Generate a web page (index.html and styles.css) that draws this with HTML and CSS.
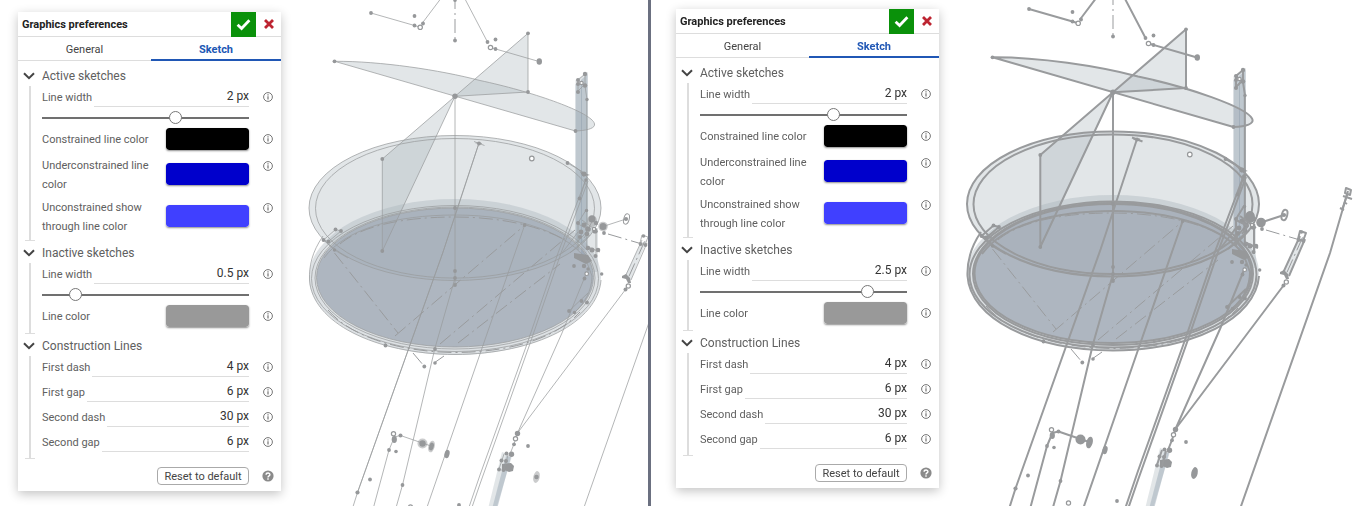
FILE: index.html
```html
<!DOCTYPE html>
<html lang="en">
<head>
<meta charset="utf-8">
<title>Graphics preferences</title>
<link rel="stylesheet" href="styles.css">
</head>
<body>
<svg class="defs" aria-hidden="true">
  <defs>
    <symbol id="i-check" viewBox="0 0 14 12"><path d="M1.5 6.2 5.2 9.8 12.5 2" fill="none" stroke="currentColor" stroke-width="2.6"/></symbol>
    <symbol id="i-close" viewBox="0 0 10 10"><path d="M1 1 9 9M9 1 1 9" fill="none" stroke="currentColor" stroke-width="2.8"/></symbol>
    <symbol id="i-chevron" viewBox="0 0 12 8"><path d="M1 1.2 6 6.2 11 1.2" fill="none" stroke="currentColor" stroke-width="2"/></symbol>
    <symbol id="i-info" viewBox="0 0 10 10"><circle cx="5" cy="5" r="4.4" fill="none" stroke="currentColor" stroke-width="0.9"/><path d="M5 4.2V7.6M5 2.3V3.4" stroke="currentColor" stroke-width="1.1"/></symbol>
    <symbol id="i-help" viewBox="0 0 12 12"><circle cx="6" cy="6" r="5.6" fill="currentColor"/><path d="M4.1 4.8C4.1 2.4 8 2.5 7.9 4.7 7.8 6 6 5.9 6 7.5M6 8.3V9.7" fill="none" stroke="#fff" stroke-width="1.4"/></symbol>

    <g id="model">
      <g class="face">
        <ellipse cx="455" cy="208" rx="146" ry="72.5"/>
        <path d="M455 96.3 382.3 159V251Z"/>
        <path d="M455 96.3 528 33.3V92Z"/>
        <path d="M334.5 61.3C380 61 440 70 480 80.5 530 91 588 111 594 122.500 597 128 588 130.500 575.500 131Z"/>
        <path d="M575.500 80 588 72V250H575.500Z"/>
      </g>
      <path class="face-band" fill-rule="evenodd" d="M309 277a146 78 0 1 0 292 0a146 78 0 1 0 -292 0ZM316.500 277.500a138.500 69.500 0 1 0 277 0a138.500 69.500 0 1 0 -277 0Z"/>
      <ellipse class="face-dark" cx="455" cy="277.500" rx="138.500" ry="69.500"/>
      <path class="face-mast" d="M575.500 84H582V243H575.500Z"/>
      <path class="face-mast" d="M581 80 587.500 74V262L581 256Z"/>
      <path class="face" d="M502 452 512 456 495 513H487Z"/>
      <path class="face-mast" d="M506 456 511 457 496 513H491Z"/>
      <path class="face" d="M588 228H598V272H588ZM641 243 647 240 631 280 625 276Z"/>

      <g class="edge">
        <ellipse cx="455" cy="208" rx="146" ry="72.500"/>
        <ellipse cx="455" cy="208.300" rx="139.500" ry="69.800"/>
        <ellipse cx="455" cy="277.500" rx="138.500" ry="69.500"/>
        <ellipse cx="455" cy="278" rx="140" ry="71"/>
        <path d="M323 236C312 252 309 266 309.500 280 312 322 374 354 455 354.500 536 354 598 322 601 280"/>
        <ellipse cx="455" cy="278.500" rx="143.500" ry="73"/>
        <path d="M324 258C345 229 395 215 455 215 520 215 570 234 588 262"/>
        <path d="M455 96.300 382.300 159V251ZM455 96.300 528 33.300V92ZM455 96.300V285"/>
        <path d="M334.500 61.300C380 61 440 70 480 80.500 530 91 588 111 594 122.500 597 128 588 130.500 575.500 131Z"/>
        <path d="M371 13 414.500 25.500 420 27.300M422 23.500 443.500-5M463-5 465-1 487.500 42M490.500 47.500 539 61.500"/>
        <path d="M479 143 442.700 253 357.500 492.500 351 513M479 143 442.700 253 357.500 492.500"/>
        <path d="M474 141.500 484.500 145.500M475.500 143 482 143.500"/>
        <path d="M455 278 435 348 402.500 485 394.500 513M394 438 389 450 372 513"/>
        <path d="M524.700 225 515 253 480 354 425 513"/>
        <path d="M586 179 558 253 527 344 480 475 467 513M588 181 561 253 529.500 345 480 484 470 513"/>
        <path d="M586 274 562 333 517.500 433 625.500 289.500M517.500 433 514 444 510 454"/>
        <path d="M642 240 625 277M647 243 631 280"/>
        <path d="M690 195 672 257 582 513M690 195 672 257"/>
        <path d="M585 74 578 80V91L584 85 578 80M585 74V86L587 99.500M586.800 99V250"/>
        <path d="M567.500 163 588 175M580 198 586 179M586 210 578 223V250M578 232 562 253M590 235 570 253"/>
        <path d="M323.500 240 335.500 229.500 341 231 328.500 241.500 323.500 240 334.500 250 348 258"/>
        <path d="M603 226.500 626 219M596 228V258M400.500 435.500 394 437M400.500 435.500 431 446"/>
        <path d="M569 311 588 293M574.500 312.500C584 304 592 291 592 276L586 260"/>
      </g>
      <g class="dash">
        <path d="M455 -5V41M334.500 253 398 333M413 353 424 366M395 336 525 225M440 344 575 230M458 343 560 264M444 356 434 363M608 234 642 244M644.500 241.500 628 278.500"/>
        <path d="M340 244C360 227 400 217 455 217 500 217 540 226 565 240"/>
        <path d="M328 310C350 336 398 352 455 352.500 520 352 560 334 580 312"/>
      </g>
      <g class="point">
        <circle cx="371" cy="13" r="1.900"/><circle cx="414.500" cy="16" r="1.900"/><circle cx="414.500" cy="25.500" r="1.900"/><circle cx="423" cy="23.500" r="1.900"/><circle cx="455" cy="0" r="1.900"/><circle cx="455" cy="40.500" r="1.900"/>
        <circle cx="487.500" cy="42" r="1.900"/><circle cx="495.500" cy="39.500" r="1.900"/><circle cx="495.500" cy="49" r="1.900"/><ellipse cx="539.300" cy="61.500" rx="2.700" ry="3.200"/>
        <circle cx="334.500" cy="61.300" r="1.900"/><circle cx="455" cy="96.300" r="2.700"/><circle cx="528" cy="33.300" r="1.900"/><circle cx="528" cy="92" r="1.900"/><circle cx="382.300" cy="159" r="1.900"/><circle cx="382.300" cy="251" r="1.900"/>
        <circle cx="575.500" cy="131" r="1.900"/><circle cx="585" cy="74" r="2.200"/><circle cx="578" cy="80" r="2"/><circle cx="578" cy="84" r="2"/><circle cx="578" cy="92" r="2"/><circle cx="585" cy="85.500" r="2.300"/><circle cx="587" cy="99.500" r="1.700"/>
        <circle cx="567.500" cy="163" r="1.900"/><path d="M580 172 590 175 583 176.500Z"/><circle cx="584" cy="174" r="2.400"/><circle cx="586" cy="180" r="1.800"/><circle cx="579.500" cy="198.500" r="1.900"/><circle cx="586.500" cy="210.500" r="1.700"/>
        <circle cx="479" cy="143.500" r="2"/><circle cx="455" cy="208" r="1.900"/><circle cx="524.700" cy="225" r="1.900"/>
        <circle cx="323.500" cy="240" r="1.900"/><circle cx="328.500" cy="241.500" r="1.900"/><circle cx="335.500" cy="229.500" r="1.900"/><circle cx="341" cy="231" r="1.900"/><circle cx="334.500" cy="250" r="1.700"/>
        <circle cx="578" cy="223" r="2"/><circle cx="584" cy="225" r="2.400"/><circle cx="588" cy="229" r="2.800"/><circle cx="592" cy="219" r="3.500"/><circle cx="596" cy="223" r="2.200"/><circle cx="581" cy="232" r="2.400"/><circle cx="587" cy="234" r="2.300"/><circle cx="595" cy="231" r="2.600"/><circle cx="580" cy="237" r="2"/>
        <circle cx="603" cy="226.500" r="3.500"/><circle cx="604" cy="233" r="1.900"/><circle cx="626" cy="219" r="2.100"/><circle cx="643.500" cy="236" r="1.800"/><circle cx="640.500" cy="244" r="1.900"/><circle cx="645.500" cy="245" r="1.900"/>
        <circle cx="588" cy="248" r="2.200"/><circle cx="592" cy="250" r="2.500"/><circle cx="598" cy="250" r="2.300"/><path d="M574 253 588 255 592 261 586 264 574 258Z"/><circle cx="595.500" cy="256" r="2"/><circle cx="584" cy="266" r="2.200"/><circle cx="574" cy="266" r="1.900"/><circle cx="588" cy="269" r="1.700"/><circle cx="584.500" cy="278.500" r="1.900"/><circle cx="601.700" cy="274" r="1.700"/>
        <circle cx="581.500" cy="301" r="1.900"/><circle cx="587" cy="302.500" r="1.900"/><circle cx="569" cy="311" r="1.900"/><circle cx="574.500" cy="312.500" r="1.700"/>
        <path d="M622 276 626 274 630 278 631 283 628 283 626 279 622 278Z"/><circle cx="625.500" cy="289.500" r="2"/>
        <circle cx="455" cy="271" r="1.900"/><circle cx="455" cy="278" r="1.900"/><circle cx="455" cy="285" r="1.900"/><circle cx="385.500" cy="345.500" r="1.900"/><circle cx="435" cy="349" r="1.900"/><circle cx="435" cy="363" r="1.800"/><circle cx="424.300" cy="366.500" r="1.900"/>
        <ellipse cx="394.300" cy="439.500" rx="2.600" ry="3.400"/><circle cx="400.500" cy="435.500" r="2"/><circle cx="422.500" cy="443.500" r="3.200"/><ellipse cx="431.500" cy="446.500" rx="2.300" ry="4" transform="rotate(15 431.500 446.500)"/><circle cx="389" cy="450" r="1.900"/><circle cx="396" cy="451.500" r="1.800"/><ellipse cx="447" cy="454" rx="2.500" ry="4.200" transform="rotate(15 447 454)"/>
        <circle cx="370" cy="479.500" r="1.900"/><circle cx="357.500" cy="492.500" r="2.100"/><circle cx="402.500" cy="485" r="1.900"/><circle cx="459" cy="505" r="1.900"/>
        <circle cx="517.500" cy="433.500" r="2.700"/><circle cx="514" cy="444.300" r="1.900"/><circle cx="528" cy="446" r="1.900"/><circle cx="506.500" cy="453.500" r="2"/><circle cx="511.500" cy="454.300" r="2.700"/><circle cx="501.500" cy="460.500" r="2"/><circle cx="506" cy="461" r="2"/><circle cx="499" cy="469.500" r="1.900"/><circle cx="503.500" cy="470" r="2"/><path d="M502 464 511 463 514 466 513 471 509 472 502 469Z"/><circle cx="536.500" cy="477" r="2.300"/>
      </g>
      <g class="cap">
        <circle cx="422.500" cy="443.500" r="5"/><ellipse cx="431.500" cy="446.500" rx="3.200" ry="6" transform="rotate(15 431.500 446.500)"/><ellipse cx="536.500" cy="477" rx="3.200" ry="6" transform="rotate(12 536.500 477)"/><circle cx="603" cy="226.500" r="4.800"/><ellipse cx="592" cy="221" rx="5" ry="6"/>
      </g>
      <g class="loop">
        <ellipse cx="626.500" cy="219" rx="2.700" ry="5.300" transform="rotate(15 626.500 219)"/>
      </g>
      <g class="edge">
        <path d="M688 192 693 194 692 199 687 197ZM685 200 694 203M689 199 684 214M686 206 689 208M682 212 686 214M642 235 648 237 645 245 640 243Z"/>
        <path d="M504 454 499 469M508 455 504 470M578 224 590 230 584 238M582 220 598 232M586 246 600 252"/>
      </g>
      <g class="ring">
        <circle cx="420.200" cy="27.300" r="2.200"/><circle cx="490.500" cy="47.500" r="2.200"/><circle cx="531.800" cy="158.500" r="2.300"/><circle cx="581.500" cy="83" r="1.700"/><circle cx="594" cy="229" r="1.600"/><circle cx="586.700" cy="273.700" r="1.800"/><circle cx="628.300" cy="286" r="2.100"/><circle cx="515.500" cy="438.700" r="2.100"/><circle cx="393.500" cy="433.700" r="2.100"/><circle cx="410.500" cy="507" r="2.100"/>
      </g>
    </g>
  </defs>
</svg>

<main class="compare">
  <section class="pane pane-left">
    <svg class="scene scene-thin" role="img" aria-label="Model with thin sketch lines"><use href="#model"/></svg>
    <form class="panel">
      <header class="panel-head">
        <h2>Graphics preferences</h2>
        <button type="button" class="accept" aria-label="Accept"><svg><use href="#i-check"/></svg></button>
        <button type="button" class="close" aria-label="Close"><svg><use href="#i-close"/></svg></button>
      </header>
      <nav class="tabs"><button type="button">General</button><button type="button" class="active">Sketch</button></nav>
      <div class="groups">
        <section>
          <button type="button" class="group-title"><svg><use href="#i-chevron"/></svg>Active sketches</button>
          <div class="group-body">
            <div class="row"><div class="field"><label for="a1">Line width</label><input type="text" id="a1" value="2 px"></div><svg class="info"><use href="#i-info"/></svg></div>
            <div class="slider"><input type="range" aria-label="Active line width" min="0.1" max="3" step="0.1" value="2"></div>
            <div class="row color"><label for="a2">Constrained line color</label><input type="color" id="a2" value="#000000"><svg class="info"><use href="#i-info"/></svg></div>
            <div class="row color tall"><label for="a3">Underconstrained line color</label><input type="color" id="a3" value="#0000cc"><svg class="info"><use href="#i-info"/></svg></div>
            <div class="row color tall"><label for="a4">Unconstrained show through line color</label><input type="color" id="a4" value="#4040ff"><svg class="info"><use href="#i-info"/></svg></div>
          </div>
        </section>
        <section>
          <button type="button" class="group-title"><svg><use href="#i-chevron"/></svg>Inactive sketches</button>
          <div class="group-body">
            <div class="row"><div class="field"><label for="a5">Line width</label><input type="text" id="a5" value="0.5 px"></div><svg class="info"><use href="#i-info"/></svg></div>
            <div class="slider"><input type="range" aria-label="Inactive line width" min="0.1" max="3" step="0.1" value="0.5"></div>
            <div class="row color"><label for="a6">Line color</label><input type="color" id="a6" value="#999999"><svg class="info"><use href="#i-info"/></svg></div>
          </div>
        </section>
        <section>
          <button type="button" class="group-title"><svg><use href="#i-chevron"/></svg>Construction Lines</button>
          <div class="group-body spaced">
            <div class="row"><div class="field"><label for="a7">First dash</label><input type="text" id="a7" value="4 px"></div><svg class="info"><use href="#i-info"/></svg></div>
            <div class="row"><div class="field"><label for="a8">First gap</label><input type="text" id="a8" value="6 px"></div><svg class="info"><use href="#i-info"/></svg></div>
            <div class="row"><div class="field"><label for="a9">Second dash</label><input type="text" id="a9" value="30 px"></div><svg class="info"><use href="#i-info"/></svg></div>
            <div class="row"><div class="field"><label for="a10">Second gap</label><input type="text" id="a10" value="6 px"></div><svg class="info"><use href="#i-info"/></svg></div>
          </div>
        </section>
      </div>
      <footer class="panel-foot"><button type="button" class="reset">Reset to default</button><button type="button" class="help" aria-label="Help"><svg><use href="#i-help"/></svg></button></footer>
    </form>
  </section>

  <section class="pane pane-right">
    <svg class="scene scene-thick" role="img" aria-label="Model with thick sketch lines"><use href="#model" x="7" y="-4"/></svg>
    <form class="panel">
      <header class="panel-head">
        <h2>Graphics preferences</h2>
        <button type="button" class="accept" aria-label="Accept"><svg><use href="#i-check"/></svg></button>
        <button type="button" class="close" aria-label="Close"><svg><use href="#i-close"/></svg></button>
      </header>
      <nav class="tabs"><button type="button">General</button><button type="button" class="active">Sketch</button></nav>
      <div class="groups">
        <section>
          <button type="button" class="group-title"><svg><use href="#i-chevron"/></svg>Active sketches</button>
          <div class="group-body">
            <div class="row"><div class="field"><label for="b1">Line width</label><input type="text" id="b1" value="2 px"></div><svg class="info"><use href="#i-info"/></svg></div>
            <div class="slider"><input type="range" aria-label="Active line width" min="0.1" max="3" step="0.1" value="2"></div>
            <div class="row color"><label for="b2">Constrained line color</label><input type="color" id="b2" value="#000000"><svg class="info"><use href="#i-info"/></svg></div>
            <div class="row color tall"><label for="b3">Underconstrained line color</label><input type="color" id="b3" value="#0000cc"><svg class="info"><use href="#i-info"/></svg></div>
            <div class="row color tall"><label for="b4">Unconstrained show through line color</label><input type="color" id="b4" value="#4040ff"><svg class="info"><use href="#i-info"/></svg></div>
          </div>
        </section>
        <section>
          <button type="button" class="group-title"><svg><use href="#i-chevron"/></svg>Inactive sketches</button>
          <div class="group-body">
            <div class="row"><div class="field"><label for="b5">Line width</label><input type="text" id="b5" value="2.5 px"></div><svg class="info"><use href="#i-info"/></svg></div>
            <div class="slider"><input type="range" aria-label="Inactive line width" min="0.1" max="3" step="0.1" value="2.5"></div>
            <div class="row color"><label for="b6">Line color</label><input type="color" id="b6" value="#999999"><svg class="info"><use href="#i-info"/></svg></div>
          </div>
        </section>
        <section>
          <button type="button" class="group-title"><svg><use href="#i-chevron"/></svg>Construction Lines</button>
          <div class="group-body spaced">
            <div class="row"><div class="field"><label for="b7">First dash</label><input type="text" id="b7" value="4 px"></div><svg class="info"><use href="#i-info"/></svg></div>
            <div class="row"><div class="field"><label for="b8">First gap</label><input type="text" id="b8" value="6 px"></div><svg class="info"><use href="#i-info"/></svg></div>
            <div class="row"><div class="field"><label for="b9">Second dash</label><input type="text" id="b9" value="30 px"></div><svg class="info"><use href="#i-info"/></svg></div>
            <div class="row"><div class="field"><label for="b10">Second gap</label><input type="text" id="b10" value="6 px"></div><svg class="info"><use href="#i-info"/></svg></div>
          </div>
        </section>
      </div>
      <footer class="panel-foot"><button type="button" class="reset">Reset to default</button><button type="button" class="help" aria-label="Help"><svg><use href="#i-help"/></svg></button></footer>
    </form>
  </section>
</main>
</body>
</html>
```
FILE: styles.css
```css
* { box-sizing: border-box; }
body {
  margin: 0;
  background: #fff;
  color: #606060;
  font-family: Roboto, "Liberation Sans", sans-serif;
  font-size: 11px;
}
button, input {
  margin: 0;
  padding: 0;
  border: 0;
  background: none;
  color: inherit;
  font: inherit;
}
.defs { position: absolute; width: 0; height: 0; }

.compare { display: grid; grid-template-columns: 648fr 717fr; min-height: 100vh; }
.pane { position: relative; overflow: hidden; min-width: 0; }
.pane-left { padding: 12px 18px 0; }
.pane-right { padding: 9px 25px 0; border-left: 3px solid #6b7080; }

/* Model view behind the panel */
.scene { position: absolute; inset: 0; width: 100%; height: 100%; }
.scene-thin { --edge: 1px; --edge-color: #999b9dbb; --cap-opacity: 0.5; }
.scene-thick { --edge: 2px; --edge-color: #999b9d; --cap-opacity: 1; }
.face { fill: rgba(166, 178, 184, 0.32); }
.face-band { fill: rgba(170, 180, 187, 0.4); }
.face-dark { fill: rgba(160, 169, 181, 0.85); }
.face-mast { fill: rgba(130, 148, 164, 0.36); }
.edge { fill: none; stroke: var(--edge-color); stroke-width: var(--edge); stroke-linejoin: round; }
.dash { fill: none; stroke: #999b9d; stroke-width: 1px; stroke-dasharray: 14 4 2 4; }
.point { fill: #96989a; }
.cap { fill: #96989a; opacity: var(--cap-opacity); }
.loop { fill: none; stroke: #999b9d; stroke-width: var(--edge); }
.ring { fill: #fff; stroke: #96989a; stroke-width: 1.2px; }

.panel {
  position: relative;
  width: 263px;
  padding-bottom: 6px;
  background: #fff;
  box-shadow: 0 3px 10px rgba(0, 0, 0, 0.24);
}
.panel-head {
  display: flex;
  align-items: center;
  height: 25px;
  padding-left: 4px;
  border-bottom: 1px solid #ddd;
}
.panel-head h2 { flex: 1; margin: 0; padding-top: 1px; font-size: 11px; font-weight: 700; color: #222; }
.accept, .close { display: grid; place-items: center; height: 25px; }
.accept { width: 25px; background: #0a910a; color: #fff; }
.accept svg { width: 15px; height: 13px; }
.close { width: 25px; color: #bd2431; }
.close svg { width: 10px; height: 10px; }
.tabs { display: flex; height: 24px; }
.tabs button { flex: 133 1 0; padding-top: 2px; border-bottom: 1px solid #ddd; color: #444; }
.tabs .active { flex-grow: 130; padding-top: 3px; border-bottom: 2px solid #2057b5; color: #2057b5; font-weight: 700; }

.groups { display: grid; gap: 2px; padding-top: 5px; }
.group-title {
  display: flex;
  align-items: center;
  gap: 7px;
  width: 100%;
  height: 20px;
  padding-left: 5px;
  font-size: 12px;
  color: #606060;
}
.group-title svg { width: 12px; height: 8px; color: #444; }
.group-body {
  position: relative;
  margin: 0 8px 0 11px;
  padding: 0 0 5px 11px;
  border-left: 2px solid #ddd;
}
.group-body::after {
  content: "";
  position: absolute;
  left: -6px;
  bottom: 0;
  width: 10px;
  height: 1px;
  background: #ddd;
}
.row { display: grid; grid-template-columns: 1fr 10px; column-gap: 14px; align-items: start; }
.info { width: 10px; height: 10px; margin-top: 6px; color: #666; }
.field { display: flex; gap: 2px; height: 21px; }
.field label { line-height: 23px; }
.field input {
  flex: 1;
  min-width: 0;
  height: 21px;
  border-bottom: 1px solid #ddd;
  font-size: 12px;
  text-align: right;
  color: #333;
}
.spaced { display: grid; gap: 4px; padding-bottom: 7px; }
.slider { height: 21px; margin-right: 24px; }
.slider input { display: block; width: 100%; height: 21px; appearance: none; }
.slider input::-webkit-slider-runnable-track { height: 2px; background: #707070; }
.slider input::-webkit-slider-thumb {
  appearance: none;
  width: 13px;
  height: 13px;
  margin-top: -6px;
  border: 1px solid #777;
  border-radius: 50%;
  background: #fff;
}
.color { grid-template-columns: 1fr 83px 10px; column-gap: 14px; min-height: 24px; }
.color label { padding-top: 2px; line-height: 19px; margin-right: -10px; }
.color input {
  display: block;
  width: 83px;
  height: 22px;
  border-radius: 3px;
  appearance: none;
  box-shadow: 0 1px 2px rgba(0, 0, 0, 0.45);
}
.color input::-webkit-color-swatch-wrapper { padding: 0; }
.color input::-webkit-color-swatch { border: 0; border-radius: 3px; }
.tall { padding-top: 4px; }
.tall label { padding-top: 0; }
.tall input { margin-top: 7px; }
.tall .info { margin-top: 5px; }

.panel-foot { display: flex; align-items: center; justify-content: flex-end; gap: 13px; padding: 8px 7px 0 0; }
.reset {
  width: 92px;
  height: 18px;
  border: 1px solid #aaa;
  border-radius: 4px;
  color: #444;
}
.help { width: 12px; height: 12px; color: #8a8a8a; }
.help svg { display: block; width: 12px; height: 12px; }
```
